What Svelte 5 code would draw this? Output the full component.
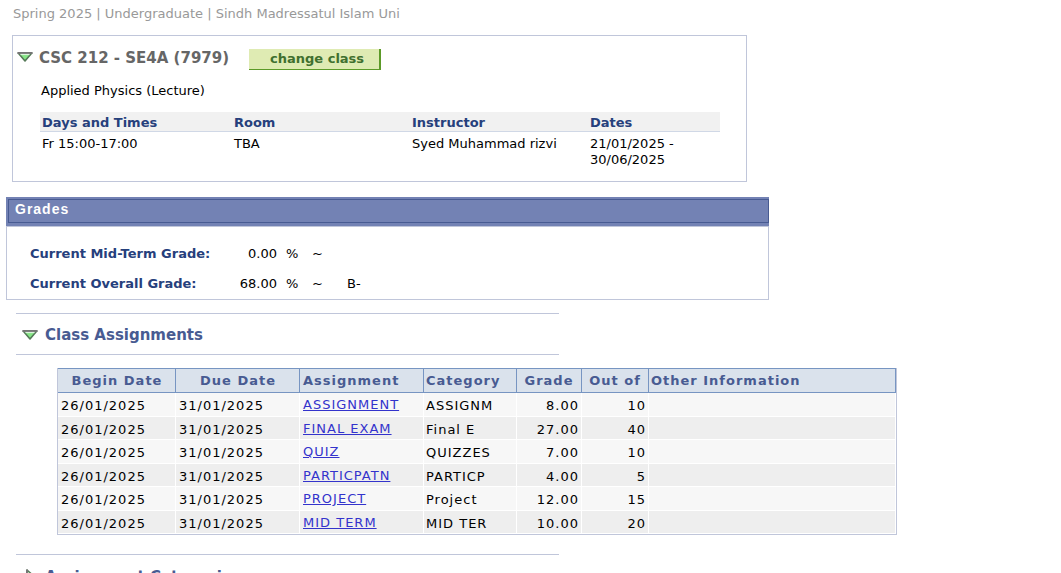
<script>
  const context = ['Spring 2025', 'Undergraduate', 'Sindh Madressatul Islam Uni'];

  const grades = [
    { label: 'Current Mid-Term Grade:', value: '0.00', letter: '' },
    { label: 'Current Overall Grade:', value: '68.00', letter: 'B-' }
  ];

  const assignments = [
    { name: 'ASSIGNMENT', category: 'ASSIGNM', grade: '8.00', outOf: 10 },
    { name: 'FINAL EXAM', category: 'Final E', grade: '27.00', outOf: 40 },
    { name: 'QUIZ', category: 'QUIZZES', grade: '7.00', outOf: 10 },
    { name: 'PARTICPATN', category: 'PARTICP', grade: '4.00', outOf: 5 },
    { name: 'PROJECT', category: 'Project', grade: '12.00', outOf: 15 },
    { name: 'MID TERM', category: 'MID TER', grade: '10.00', outOf: 20 }
  ];
</script>

{#snippet arrow(open)}
  <svg class="arrow" width="16" height="16" viewBox="0 0 16 16" aria-hidden="true">
    {#if open}
      <path d="M1.2 4H14.8L8 12Z" fill="#86e686" stroke="#567a58" stroke-width="1.6" stroke-linejoin="round" />
      <path d="M0.5 4H15.5" stroke="#757575" stroke-width="2" />
      <path d="M3.5 5.5H12.5" stroke="#dcf3dc" stroke-width="1.2" />
    {:else}
      <path d="M5 1.2V14.8L13 8Z" fill="#86e686" stroke="#567a58" stroke-width="1.6" stroke-linejoin="round" />
      <path d="M5 0.5V15.5" stroke="#757575" stroke-width="2" />
      <path d="M6.5 3.5V12.5" stroke="#dcf3dc" stroke-width="1.2" />
    {/if}
  </svg>
{/snippet}

<main>
  <p class="context">{context.join(' | ')}</p>

  <section class="class-card">
    <div class="class-head">
      <button class="toggle" aria-label="Collapse class details">{@render arrow(true)}</button>
      <h1>CSC 212 - SE4A (7979)</h1>
      <button class="change">change class</button>
    </div>
    <p class="course">Applied Physics (Lecture)</p>
    <table class="meeting">
      <colgroup><col class="days" /><col class="room" /><col class="room" /><col /></colgroup>
      <thead>
        <tr><th>Days and Times</th><th>Room</th><th>Instructor</th><th>Dates</th></tr>
      </thead>
      <tbody>
        <tr><td>Fr 15:00-17:00</td><td>TBA</td><td>Syed Muhammad rizvi</td><td>21/01/2025 -<br />30/06/2025</td></tr>
      </tbody>
    </table>
  </section>

  <section class="grades">
    <div class="bar"><h2>Grades</h2></div>
    <div class="grade-list">
      {#each grades as g}
        <div class="grade-row">
          <span class="label">{g.label}</span>
          <span class="value">{g.value}</span>
          <span>%</span>
          <span>~</span>
          <span class="letter">{g.letter}</span>
        </div>
      {/each}
    </div>
  </section>

  <section class="group">
    <div class="group-head">
      <button class="toggle" aria-label="Collapse class assignments">{@render arrow(true)}</button>
      <h2>Class Assignments</h2>
    </div>
    <table class="grid">
      <colgroup>
        <col class="date" /><col class="mid" /><col class="mid" /><col class="cat" /><col class="grade" /><col class="out" /><col />
      </colgroup>
      <thead>
        <tr>
          <th class="center">Begin Date</th>
          <th class="center">Due Date</th>
          <th>Assignment</th>
          <th>Category</th>
          <th class="center">Grade</th>
          <th class="center">Out of</th>
          <th>Other Information</th>
        </tr>
      </thead>
      <tbody>
        {#each assignments as a}
          <tr>
            <td>26/01/2025</td>
            <td>31/01/2025</td>
            <td class="link"><a href="#detail">{a.name}</a></td>
            <td class="kind">{a.category}</td>
            <td class="num">{a.grade}</td>
            <td class="num">{a.outOf}</td>
            <td></td>
          </tr>
        {/each}
      </tbody>
    </table>
  </section>

  <section class="group collapsed">
    <div class="group-head">
      <button class="toggle" aria-label="Expand assignment categories">{@render arrow(false)}</button>
      <h2>Assignment Categories</h2>
    </div>
  </section>
</main>

<style>
  :global(html) { scrollbar-width: none; }
  :global(body) { background: #fff; }

  main {
    padding: 6px;
    font: 13px/16px Verdana, 'DejaVu Sans', sans-serif;
    color: #000;
  }
  h1, h2, p { margin: 0; }
  table { border-collapse: separate; border-spacing: 0; table-layout: fixed; }
  th { text-align: left; }
  .context { padding-left: 7px; color: #999; }

  .toggle {
    display: flex;
    padding: 0;
    border: 0;
    background: none;
    cursor: pointer;
  }
  .arrow { display: block; }

  .class-card {
    box-sizing: border-box;
    max-width: 735px;
    margin: 13px 6px 0;
    padding: 13px 26px 13px 4px;
    border: 1px solid #c0c6da;
  }
  .class-head { display: flex; align-items: flex-start; }
  h1 {
    margin: 0 20px 0 6px;
    font-size: 15px;
    line-height: 18px;
    color: #666;
  }
  .change {
    width: 132px;
    height: 21px;
    padding: 0 0 0 6px;
    border: solid #5c9a28;
    border-width: 0 2px 1px 0;
    background: #dfebb3;
    color: #3f702f;
    font: bold 13px/20px Verdana, 'DejaVu Sans', sans-serif;
    cursor: pointer;
  }
  .course { margin: 13px 0 13px 24px; }
  .meeting { width: calc(100% - 23px); margin-left: 23px; }
  .days { width: 192px; }
  .room { width: 178px; }
  .meeting th {
    padding: 3px 2px 0;
    border-bottom: 1px solid #d0d8e6;
    background: #f1f1f1;
    color: #26407c;
  }
  .meeting td { padding: 4px 2px 0; vertical-align: top; }

  .grades { max-width: 763px; margin-top: 15px; }
  .bar {
    padding: 2px 0 3px 2px;
    background: #7382b4;
  }
  .bar h2 {
    padding: 1px 6px 5px;
    border: 1px solid #485b92;
    color: #fff;
    font: bold 14px/16px 'Liberation Sans', Arial, sans-serif;
    letter-spacing: 1px;
  }
  .grade-list {
    display: grid;
    gap: 14px;
    padding: 19px 23px 7px;
    border: 1px solid #c0c6da;
  }
  .grade-row {
    display: grid;
    grid-template-columns: 182px 56px 17px 26px auto;
    column-gap: 9px;
  }
  .label { color: #26407c; font-weight: bold; white-space: nowrap; }
  .value { text-align: right; }

  .group { margin: 13px 0 0 10px; }
  .collapsed { margin-top: 19px; }
  .group-head {
    box-sizing: border-box;
    display: flex;
    align-items: center;
    gap: 7px;
    max-width: 543px;
    padding: 11px 0 9px 6px;
    border: solid #c0c6da;
    border-width: 1px 0;
  }
  .collapsed .group-head { padding-top: 12px; }
  .group-head h2 { font-size: 15px; line-height: 20px; color: #485b92; }

  .grid {
    width: calc(100% - 41px);
    max-width: 840px;
    margin: 13px 0 0 41px;
    border: solid #c0c6da;
    border-width: 0 1px 1px;
    letter-spacing: 1px;
  }
  .date { width: 118px; }
  .mid { width: 124px; }
  .cat { width: 93px; }
  .grade { width: 65px; }
  .out { width: 67px; }
  .grid th {
    height: 23px;
    padding: 0 2px 0 3px;
    border: solid #7795c2;
    border-width: 1px 1px 1px 0;
    background: #dae2ec;
    color: #485b92;
  }
  .grid th:nth-child(n + 4) { padding-left: 2px; }
  .grid th.center { text-align: center; }
  .grid td {
    height: 20px;
    padding: 3px 2px 0 3px;
    border: solid #fff;
    border-width: 0 1px 1px 0;
    background: #f7f7f7;
  }
  .grid tr:nth-child(even) td { height: 19px; background: #eee; }
  .grid .kind { padding-left: 2px; }
  .grid .num { text-align: right; }
  .grid .link { padding: 2px 3px 1px; }
  .grid a { color: #3333cc; text-decoration: underline; }
</style>
